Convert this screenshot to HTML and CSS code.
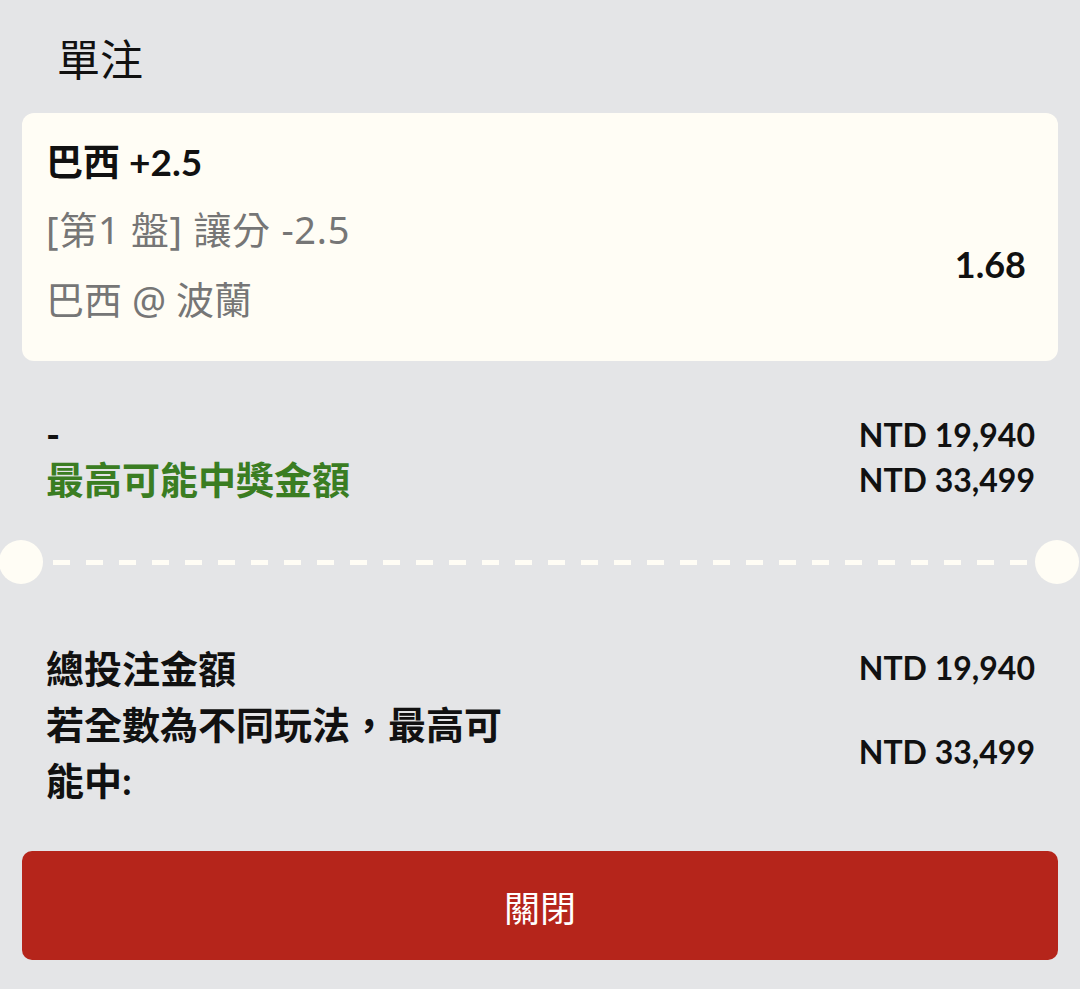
FILE: index.html
```html
<!DOCTYPE html>
<html lang="zh-Hant">
<head>
    <meta charset="UTF-8">
    <meta name="viewport" content="width=device-width, initial-scale=1.0">
    <title>單注</title>
    <link rel="stylesheet" href="styles.css">
</head>
<body>

    <div class="sheet">
        <h2 class="title">單注</h2>

        <div class="card">
            <div class="pick">巴西 +2.5</div>
            <div class="market">[第1 盤] 讓分 -2.5</div>
            <div class="match">巴西 @ 波蘭</div>
            <div class="odds">1.68</div>
        </div>

        <div class="summary">
            <div class="label">-</div>
            <div class="amount">NTD 19,940</div>
            <div class="label win">最高可能中獎金額</div>
            <div class="amount">NTD 33,499</div>
        </div>
    </div>

    <div class="divider">
        <span class="notch"></span>
        <span class="dashes"></span>
        <span class="notch"></span>
    </div>

    <div class="sheet">
        <div class="totals">
            <div class="label">總投注金額</div>
            <div class="amount">NTD 19,940</div>
            <div class="label wrap">若全數為不同玩法，最高可能中:</div>
            <div class="amount">NTD 33,499</div>
        </div>

        <button type="button" class="button">關閉</button>
    </div>

</body>
</html>
```

FILE: styles.css
```css
body { margin: 0; padding-top: 30px; background: #e4e5e7; color: #111; font-family: Lato, "Noto Sans CJK TC", sans-serif; }
.sheet { padding: 0 22px; }
.title { margin: 0 0 23px 35px; font-size: 43px; font-weight: normal; line-height: 60px; }

.card { display: grid; grid-template-columns: 1fr auto; background: #fffdf5; border-radius: 12px; padding: 24px 32px 27px 24px; }
.pick { grid-column: 1 / 3; font-size: 37px; font-weight: bold; line-height: 50px; margin-bottom: 7px; }
.market, .match { grid-column: 1; font-family: "Noto Sans", "Noto Sans CJK TC", sans-serif; font-size: 38px; color: #767676; line-height: 70px; }
.market { letter-spacing: 0.7px; }
.odds { grid-column: 2; grid-row: 2 / 4; align-self: center; font-size: 36px; font-weight: bold; }

.summary { display: grid; grid-template-columns: 1fr auto; margin: 51px 23px 0 24px; line-height: 45px; }
.label { font-size: 38px; font-weight: bold; }
.amount { font-size: 32px; font-weight: bold; text-align: right; }
.win { color: #3a7d22; }

.divider { display: flex; align-items: center; margin-top: 38px; }
.notch { width: 44px; height: 44px; border-radius: 50%; background: #fffdf5; flex: none; }
.notch:first-child { margin-left: -1px; }
.notch:last-child { margin-right: 1px; }
.dashes { flex: 1; height: 5px; margin: 0 8px 0 10px; background: repeating-linear-gradient(90deg, #fffdf5 0 17px, transparent 17px 33px); }

.totals { display: grid; grid-template-columns: 1fr auto; margin: 56px 23px 0 24px; line-height: 56px; }
.totals .amount { align-self: center; }
.wrap { width: 480px; }

.button { display: block; width: 100%; height: 109px; margin-top: 43px; background: #b5251b; color: white; border: none; border-radius: 10px; font-family: "Noto Sans CJK TC", sans-serif; font-size: 36px; cursor: pointer; }
```
